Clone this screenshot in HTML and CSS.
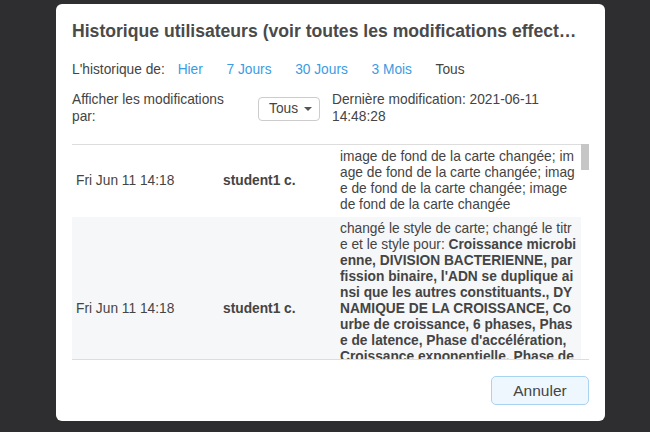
FILE: index.html
```html
<!DOCTYPE html>
<html>

<head>
    <title>Historique utilisateurs</title>
    <link rel="stylesheet" href="styles.css">
</head>

<body>
<div class="backdrop">
    <div class="modal">
        <h2 class="modal-title">Historique utilisateurs (voir toutes les modifications effectuées par les utilisateurs)</h2>

        <div class="range-row">
            <span class="range-label">L'historique de:</span>
            <a href="#" class="range-link">Hier</a>
            <a href="#" class="range-link">7 Jours</a>
            <a href="#" class="range-link">30 Jours</a>
            <a href="#" class="range-link">3 Mois</a>
            <span class="range-link current">Tous</span>
        </div>

        <div class="filter-row">
            <span class="filter-label">Afficher les modifications par:</span>
            <button class="select" type="button">Tous <span class="caret"></span></button>
            <span class="last-change">Dernière modification: 2021-06-11 14:48:28</span>
        </div>

        <div class="history">
            <div class="history-body">
                <table>
                    <colgroup>
                        <col class="col-date">
                        <col class="col-user">
                        <col class="col-desc">
                    </colgroup>
                    <tbody>
                        <tr>
                            <td>Fri Jun 11 14:18</td>
                            <td class="user">student1 c.</td>
                            <td class="desc">image de fond de la carte changée; image de fond de la carte changée; image de fond de la carte changée; image de fond de la carte changée</td>
                        </tr>
                        <tr>
                            <td>Fri Jun 11 14:18</td>
                            <td class="user">student1 c.</td>
                            <td class="desc">changé le style de carte; changé le titre et le style pour: <b>Croissance microbienne, DIVISION BACTERIENNE, par fission binaire, l'ADN se duplique ainsi que les autres constituants., DYNAMIQUE DE LA CROISSANCE, Courbe de croissance, 6 phases, Phase de latence, Phase d'accélération, Croissance exponentielle, Phase de ralentissement, Phase stationnaire, Phase de déclin</b></td>
                        </tr>
                        <tr>
                            <td>Fri Jun 11 14:16</td>
                            <td class="user">student1 c.</td>
                            <td class="desc">ajouté une connexion entre <b>Phase de latence</b> et <b>Phase d'accélération</b></td>
                        </tr>
                        <tr>
                            <td>Fri Jun 11 14:15</td>
                            <td class="user">student1 c.</td>
                            <td class="desc">ajouté une idée: <b>Phase de déclin</b>; ajouté une idée: <b>Phase stationnaire</b>; ajouté une idée: <b>Phase de ralentissement</b></td>
                        </tr>
                        <tr>
                            <td>Fri Jun 11 14:14</td>
                            <td class="user">student1 c.</td>
                            <td class="desc">changé le texte pour: <b>Courbe de croissance</b></td>
                        </tr>
                        <tr>
                            <td>Fri Jun 11 14:12</td>
                            <td class="user">student1 c.</td>
                            <td class="desc">image de fond de la carte changée; image de fond de la carte changée; image de fond de la carte changée</td>
                        </tr>
                    </tbody>
                </table>
            </div>
            <div class="scrollbar">
                <div class="scrollbar-thumb"></div>
            </div>
        </div>

        <div class="modal-footer">
            <button class="btn-cancel" type="button">Annuler</button>
        </div>
    </div>
</div>
</body>
</html>
```

FILE: styles.css
```css
* {
    box-sizing: border-box;
}
body, html {
    padding: 0;
    margin: 0;
}
body {
    background-color: #2e2e30;
    font-family: "Liberation Sans", Arial, sans-serif;
    font-size: 13.75px;
    color: #444;
}
.backdrop {
    padding: 4px 0 0 56px;
    height: 432px;
}
.modal {
    width: 549px;
    height: 417px;
    background-color: #fff;
    border-radius: 6px;
    padding: 16px;
    display: flex;
    flex-direction: column;
}
.modal-title {
    margin: 0;
    padding-right: 8px;
    font-size: 17.6px;
    line-height: 22px;
    font-weight: bold;
    color: #4a4a4a;
    white-space: nowrap;
    overflow: hidden;
    text-overflow: ellipsis;
}
.range-row {
    margin-top: 20px;
    line-height: 16px;
    display: flex;
}
.range-label {
    margin-right: 1px;
}
.range-link {
    padding: 0 11.8px;
    color: #3d9be3;
    text-decoration: none;
}
.range-link.current {
    color: #444;
}
.filter-row {
    margin-top: 14px;
    display: flex;
    align-items: center;
    line-height: 16.5px;
}
.filter-label {
    width: 174px;
    flex-shrink: 0;
}
.select {
    margin: 0 12px;
    height: 24px;
    width: 62px;
    padding: 0 0 0 10px;
    border: 1px solid #ccc;
    border-radius: 4px;
    background-color: #fff;
    font-family: inherit;
    font-size: 13.75px;
    color: #444;
    text-align: left;
    display: flex;
    align-items: center;
    flex-shrink: 0;
}
.caret {
    margin-left: 6px;
    border-top: 4px solid #555;
    border-left: 4px solid transparent;
    border-right: 4px solid transparent;
}
.last-change {
    flex: 1;
}
.history {
    margin-top: 19px;
    height: 216px;
    flex-shrink: 0;
    display: flex;
    border-bottom: 1px solid #ddd;
}
.history-body {
    flex: 1;
    overflow: hidden;
    border-top: 1px solid #ddd;
}
.scrollbar {
    width: 8px;
    flex-shrink: 0;
}
.scrollbar-thumb {
    height: 26px;
    background-color: #c6c6c6;
}
.history table {
    width: 509px;
    table-layout: fixed;
    border-collapse: collapse;
}
.col-date {
    width: 147px;
}
.col-user {
    width: 117px;
}
.col-desc {
    width: 245px;
}
.history td {
    padding: 4px;
    line-height: 16px;
    vertical-align: middle;
}
.history tr:nth-child(even) {
    background-color: #f6f7f9;
}
.history .user {
    font-weight: bold;
}
.history .desc {
    word-break: break-all;
}
.modal-footer {
    margin-top: 16px;
    display: flex;
    justify-content: flex-end;
}
.btn-cancel {
    width: 98px;
    height: 29px;
    border: 1px solid #a8d4f2;
    border-radius: 5px;
    background-color: #eef7fd;
    font-family: inherit;
    font-size: 15.5px;
    color: #444;
}
```
